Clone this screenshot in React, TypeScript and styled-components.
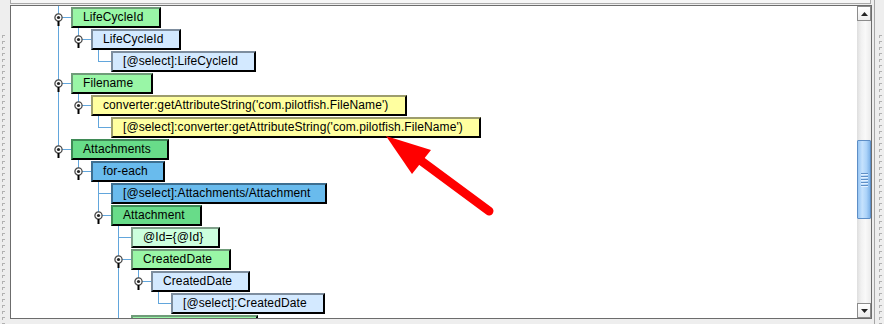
import React from 'react';
import styled, { createGlobalStyle } from 'styled-components';

const LINE = '#62a6dc';

const Global = createGlobalStyle`
  html, body { margin: 0; padding: 0; }
  body {
    width: 884px;
    height: 324px;
    overflow: hidden;
    background: #eeeeee;
    font-family: "Liberation Sans", Arial, sans-serif;
  }
`;

const Frame = styled.div`
  position: relative;
  display: flex;
  width: 884px;
  height: 324px;
  background: #eeeeee;
  overflow: hidden;
`;

const SideGrip = styled.div<{ $w: number; $border?: boolean }>`
  width: ${(p) => p.$w}px;
  flex: none;
  box-sizing: border-box;
  padding-top: 35px;
  display: flex;
  ${(p) => (p.$border ? 'margin-left: 2px; border-left: 1px solid #a6a6a6;' : '')}
`;

const Dots = styled.div<{ $offset: number }>`
  margin-left: ${(p) => p.$offset}px;
  width: 3px;
  height: 100%;
  background-image: linear-gradient(to bottom, #b2b2b2 0 1px, transparent 1px 6px),
    linear-gradient(to bottom, #b2b2b2 0 3px, transparent 3px 6px);
  background-size: 3px 6px, 1px 6px;
  background-repeat: repeat-y, repeat-y;
`;

const MainColumn = styled.div`
  width: 862px;
  flex: none;
  display: flex;
  flex-direction: column;
`;

const TopPanel = styled.div`
  height: 4px;
  width: 861px;
  box-sizing: border-box;
  flex: none;
  background: #f6f6f6;
  border: 1px solid #a9a9a9;
  border-top: none;
`;

const TopGap = styled.div`
  height: 1px;
  flex: none;
`;

const Pane = styled.div`
  height: 314px;
  flex: none;
  box-sizing: border-box;
  border: 1px solid #6c6c6c;
  background: #ffffff;
  display: flex;
`;

const Viewport = styled.div`
  flex: 1;
  overflow: hidden;
  padding-left: 37px;
  display: flex;
  flex-direction: column;
`;

const Row = styled.div`
  display: flex;
  height: 22px;
  flex: none;
`;

const Guide = styled.div<{ $on: boolean }>`
  width: 20px;
  height: 22px;
  flex: none;
  background: ${(p) => (p.$on ? `linear-gradient(${LINE}, ${LINE}) no-repeat 10px 0 / 1px 100%` : 'none')};
`;

const Connector = styled.div<{ $last: boolean }>`
  width: 23px;
  height: 22px;
  flex: none;
  box-sizing: border-box;
  padding: 7px 0 0 6px;
  background:
    linear-gradient(${LINE}, ${LINE}) no-repeat 10px 0 / 1px ${(p) => (p.$last ? '12px' : '100%')},
    linear-gradient(${LINE}, ${LINE}) no-repeat 10px 11px / 13px 1px;
`;

const NodeBox = styled.div<{ $fill: string; $edge: string; $w: number }>`
  box-sizing: border-box;
  width: ${(p) => p.$w}px;
  height: 21px;
  margin-top: 1px;
  flex: none;
  border: 2px solid;
  border-color: ${(p) => p.$edge} #000 #000 ${(p) => p.$edge};
  background: ${(p) => p.$fill};
  padding-left: 10px;
  font: 12px/17px "Liberation Sans", Arial, sans-serif;
  letter-spacing: 0.1px;
  color: #000;
  white-space: nowrap;
  overflow: hidden;
`;

const ScrollBar = styled.div`
  width: 14px;
  flex: none;
  display: flex;
  flex-direction: column;
  background: linear-gradient(to right, #dedede, #f1f1f1 30%, #f9f9f9 60%, #ebebeb);
`;

const ArrowButton = styled.div<{ $down?: boolean }>`
  height: 15px;
  flex: none;
  box-sizing: border-box;
  border: 1px solid #8c8c8c;
  background: linear-gradient(to bottom, #ffffff, #ececec);
  display: flex;
  align-items: center;
  justify-content: center;
  ${(p) => (p.$down ? 'margin-top: auto;' : '')}
`;

const Thumb = styled.div<{ $top: number; $h: number }>`
  margin-top: ${(p) => p.$top}px;
  height: ${(p) => p.$h}px;
  flex: none;
  box-sizing: border-box;
  border: 1px solid #5d8ec6;
  border-radius: 1px;
  background: linear-gradient(to right, #98c6f3, #c6e2fd 35%, #acd3f9 70%, #7fb3e8);
  display: flex;
  flex-direction: column;
  align-items: center;
  justify-content: center;
  gap: 2px;
`;

const GripLine = styled.div`
  width: 7px;
  height: 1px;
  background: #5f8fc6;
  box-shadow: 0 1px 0 #e2f0ff;
`;

const Overlay = styled.svg`
  position: absolute;
  left: 0;
  top: 0;
  pointer-events: none;
`;

type Kind = 'green' | 'lightBlue' | 'yellow' | 'darkGreen' | 'blue' | 'paleGreen';

const palette: Record<Kind, { fill: string; edge: string }> = {
  green: { fill: '#99f6a6', edge: '#6f9c79' },
  lightBlue: { fill: '#d3e9ff', edge: '#7d8d9e' },
  yellow: { fill: '#ffffa0', edge: '#9d9d6d' },
  darkGreen: { fill: '#68dc89', edge: '#3f8a56' },
  blue: { fill: '#69bbed', edge: '#3d6f91' },
  paleGreen: { fill: '#ccffdd', edge: '#80a08b' },
};

type TreeNode = { label: string; level: number; kind: Kind; width: number; icon: boolean; last: boolean };

const nodes: TreeNode[] = [
  { label: 'LifeCycleId', level: 0, kind: 'green', width: 90, icon: true, last: false },
  { label: 'LifeCycleId', level: 1, kind: 'lightBlue', width: 90, icon: true, last: true },
  { label: '[@select]:LifeCycleId', level: 2, kind: 'lightBlue', width: 145, icon: false, last: true },
  { label: 'Filename', level: 0, kind: 'green', width: 82, icon: true, last: false },
  { label: "converter:getAttributeString('com.pilotfish.FileName')", level: 1, kind: 'yellow', width: 316, icon: true, last: true },
  { label: "[@select]:converter:getAttributeString('com.pilotfish.FileName')", level: 2, kind: 'yellow', width: 370, icon: false, last: true },
  { label: 'Attachments', level: 0, kind: 'darkGreen', width: 98, icon: true, last: true },
  { label: 'for-each', level: 1, kind: 'blue', width: 74, icon: true, last: true },
  { label: '[@select]:Attachments/Attachment', level: 2, kind: 'blue', width: 216, icon: false, last: false },
  { label: 'Attachment', level: 2, kind: 'darkGreen', width: 91, icon: true, last: true },
  { label: '@Id={@Id}', level: 3, kind: 'paleGreen', width: 89, icon: false, last: false },
  { label: 'CreatedDate', level: 3, kind: 'green', width: 100, icon: true, last: false },
  { label: 'CreatedDate', level: 4, kind: 'lightBlue', width: 99, icon: true, last: true },
  { label: '[@select]:CreatedDate', level: 5, kind: 'lightBlue', width: 154, icon: false, last: true },
  { label: '', level: 3, kind: 'green', width: 127, icon: true, last: false },
];

function guideOn(index: number, level: number): boolean {
  for (let k = index + 1; k < nodes.length; k++) {
    if (nodes[k].level <= level) return nodes[k].level === level;
  }
  return false;
}

const ToggleIcon = () => (
  <svg width="9" height="14" viewBox="0 0 9 14" style={{ display: 'block' }}>
    <circle cx="4.5" cy="4.5" r="3.6" fill="#ffffff" stroke="#4a4a4a" strokeWidth="1.3" />
    <circle cx="4.5" cy="4.5" r="1.6" fill="#262626" />
    <rect x="3.5" y="8" width="2" height="5" fill="#000000" />
  </svg>
);

const Triangle = ({ down }: { down?: boolean }) => (
  <svg width="7" height="4" viewBox="0 0 7 4" style={{ display: 'block' }}>
    <polygon points={down ? '0,0 7,0 3.5,4' : '0,4 7,4 3.5,0'} fill="#222" />
  </svg>
);

export default function App() {
  return (
    <>
      <Global />
      <Frame>
        <SideGrip $w={10}>
          <Dots $offset={2} />
        </SideGrip>
        <MainColumn>
          <TopPanel />
          <TopGap />
          <Pane>
            <Viewport>
              {nodes.map((n, i) => {
                const c = palette[n.kind];
                return (
                  <Row key={i}>
                    {Array.from({ length: n.level }, (_, j) => (
                      <Guide key={j} $on={guideOn(i, j)} />
                    ))}
                    <Connector $last={n.last}>{n.icon && <ToggleIcon />}</Connector>
                    <NodeBox $fill={c.fill} $edge={c.edge} $w={n.width}>
                      {n.label}
                    </NodeBox>
                  </Row>
                );
              })}
            </Viewport>
            <ScrollBar>
              <ArrowButton>
                <Triangle />
              </ArrowButton>
              <Thumb $top={119} $h={79}>
                <GripLine />
                <GripLine />
                <GripLine />
                <GripLine />
                <GripLine />
              </Thumb>
              <ArrowButton $down>
                <Triangle down />
              </ArrowButton>
            </ScrollBar>
          </Pane>
        </MainColumn>
        <SideGrip $w={12} $border>
          <Dots $offset={4} />
        </SideGrip>
        <Overlay width="884" height="324" viewBox="0 0 884 324">
          <line x1="420" y1="160" x2="489" y2="211" stroke="#ff0000" strokeWidth="9" strokeLinecap="round" />
          <polygon points="386,136 412,174 431,150" fill="#ff0000" />
        </Overlay>
      </Frame>
    </>
  );
}
